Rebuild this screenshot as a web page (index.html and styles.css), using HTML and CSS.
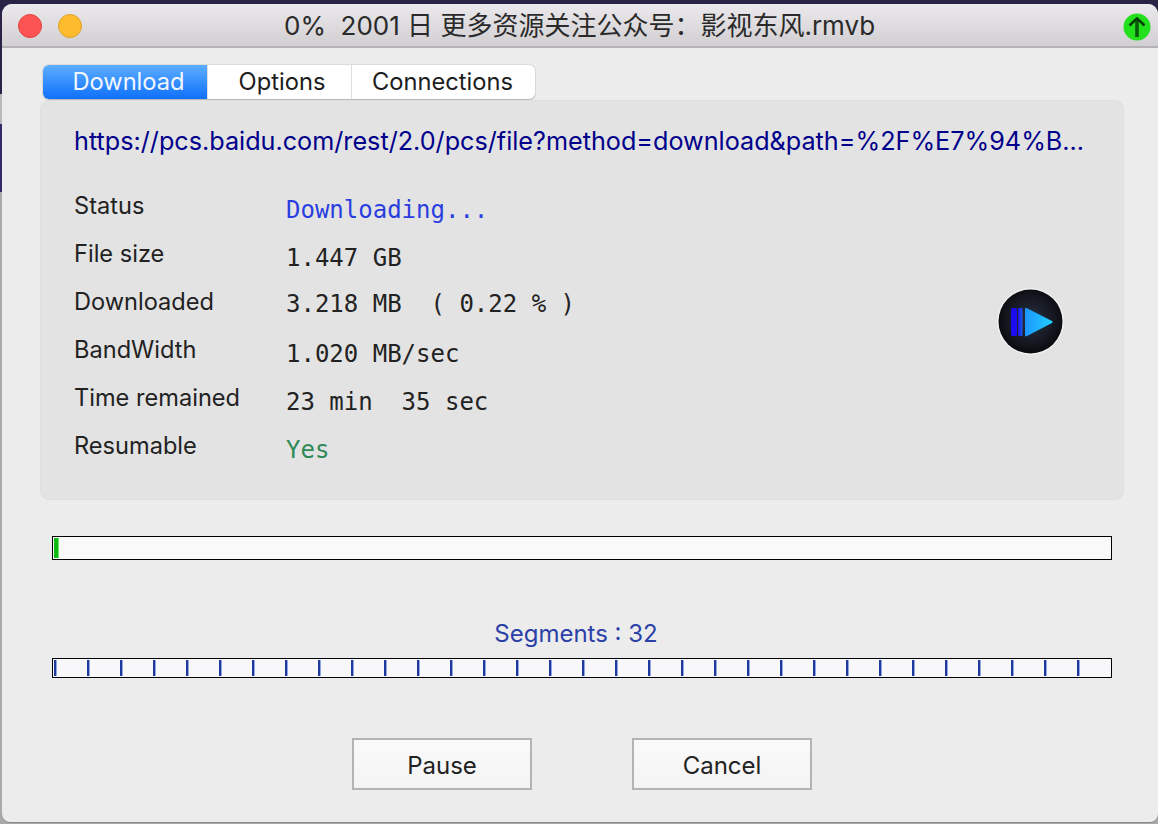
FILE: index.html
```html
<!DOCTYPE html>
<html lang="zh">
<head>
<meta charset="utf-8">
<title>Download</title>
<link rel="stylesheet" href="styles.css">
</head>
<body>
<div class="window">
  <header class="titlebar">
    <div class="lights"><span class="light red"></span><span class="light yellow"></span></div>
    <div class="title">0%&nbsp; 2001 日 更多资源关注公众号：影视东风.rmvb</div>
    <svg class="upicon" width="28" height="28" viewBox="0 0 28 28"><circle cx="14" cy="14" r="13.5" fill="#22e01c"/><path d="M14 24V6" fill="none" stroke="#0a5a0c" stroke-width="3.6"/><path d="M6.5 12.5Q11 8 14 5.5Q17 8 21.5 12.5" fill="none" stroke="#063d08" stroke-width="2.6"/></svg>
  </header>
  <main class="content">
    <nav class="tabs">
      <div class="tab active t1">Download</div>
      <div class="tab t2">Options</div>
      <div class="tab t3">Connections</div>
    </nav>
    <section class="panel">
      <div class="url">https://pcs.baidu.com/rest/2.0/pcs/file?method=download&amp;path=%2F%E7%94%B...</div>
      <div class="details">
        <div class="info">
          <div class="row"><span class="label">Status</span><span class="value blue">Downloading...</span></div>
          <div class="row"><span class="label">File size</span><span class="value">1.447 GB</span></div>
          <div class="row"><span class="label">Downloaded</span><span class="value raised">3.218 MB  ( 0.22 % )</span></div>
          <div class="row"><span class="label">BandWidth</span><span class="value">1.020 MB/sec</span></div>
          <div class="row"><span class="label">Time remained</span><span class="value">23 min  35 sec</span></div>
          <div class="row"><span class="label">Resumable</span><span class="value green">Yes</span></div>
        </div>
        <svg class="play" width="67" height="67" viewBox="0 0 67 67">
          <defs>
            <radialGradient id="disc" cx="50%" cy="48%" r="55%"><stop offset="0" stop-color="#2a3146"/><stop offset="0.7" stop-color="#14161e"/><stop offset="1" stop-color="#07080b"/></radialGradient>
            <linearGradient id="tri" x1="0" y1="0" x2="1" y2="0"><stop offset="0" stop-color="#1c96ff"/><stop offset="1" stop-color="#22d0ff"/></linearGradient>
            <linearGradient id="bar2" x1="0" y1="0" x2="1" y2="0"><stop offset="0" stop-color="#1c10e6"/><stop offset="1" stop-color="#1a5cf2"/></linearGradient>
            <filter id="soft"><feGaussianBlur stdDeviation="0.6"/></filter>
          </defs>
          <circle cx="33.5" cy="33.5" r="33.4" fill="#f2f2f2"/>
          <circle cx="33.5" cy="33.5" r="32" fill="url(#disc)"/>
          <rect x="14" y="20" width="6" height="28" rx="1.5" fill="#1f0ff0" filter="url(#soft)"/>
          <rect x="21" y="20" width="4.5" height="28" rx="1" fill="url(#bar2)" filter="url(#soft)"/>
          <path d="M28 21Q28 19.5 30 20.3L55 33Q56.5 34 55 35L30 48Q28 49 28 47.5Z" fill="url(#tri)"/>
        </svg>
      </div>
    </section>
    <div class="bar progress"><span class="fill"></span></div>
    <div class="segments-title">Segments : 32</div>
    <div class="bar segments">
      <i></i><i></i><i></i><i></i><i></i><i></i><i></i><i></i>
      <i></i><i></i><i></i><i></i><i></i><i></i><i></i><i></i>
      <i></i><i></i><i></i><i></i><i></i><i></i><i></i><i></i>
      <i></i><i></i><i></i><i></i><i></i><i></i><i></i><i></i>
    </div>
    <div class="actions">
      <button class="btn">Pause</button>
      <button class="btn">Cancel</button>
    </div>
  </main>
</div>
</body>
</html>
```
FILE: styles.css
```css
* { box-sizing: border-box; }
html, body { margin: 0; height: 100%; }
body {
  width: 1158px;
  height: 824px;
  overflow: hidden;
  background: linear-gradient(#2a2348 0, #2a2348 94px, #b9b8bb 94px, #b9b8bb 124px, #34286a 124px, #34286a 192px, #a9a9ab 192px, #a9a9ab 100%);
  font-family: "Inter", "Liberation Sans", "Noto Sans CJK SC", sans-serif;
  color: #222;
  padding: 4px 0 2px 2px;
}
.window {
  width: 1156px;
  height: 818px;
  background: #ececec;
  border-radius: 10px 10px 8px 8px;
  box-shadow: 0 1px 0 #8a8a8a;
  overflow: hidden;
  display: flex;
  flex-direction: column;
}
.titlebar {
  height: 44px;
  flex: none;
  display: flex;
  align-items: center;
  padding: 0 7px 0 16px;
  background: linear-gradient(#ebe9ec, #d1cfd2);
  border-bottom: 2px solid #b4b3b5;
}
.lights { display: flex; gap: 16px; width: 250px; flex: none; padding-top: 1px; }
.light { width: 24px; height: 24px; border-radius: 50%; }
.red { background: #fc5454; border: 1px solid #e0423f; }
.yellow { background: #fdbb2d; border: 1px solid #dea12a; }
.title {
  flex: 1;
  padding: 2px 0 0 16px;
  font-size: 26px;
  line-height: 42px;
  white-space: pre;
  color: #2a2a2a;
}
.upicon { flex: none; margin-top: 4px; }
.content { flex: 1; display: flex; flex-direction: column; padding: 17px 34px 0 38px; }
.tabs {
  display: flex;
  width: 492px;
  height: 34px;
  margin-left: 3px;
  background: #fff;
  border-radius: 6px;
  box-shadow: 0 1px 1px #b5b5b5, 0 0 0 1px #dcdcdc;
  overflow: hidden;
  font-size: 23.7px;
}
.tab { display: flex; align-items: center; justify-content: center; line-height: 34px; color: #1d1d1d; }
.tab + .tab { border-left: 1px solid #dedede; }
.t1 { width: 164px; padding-left: 7px; }
.t2 { width: 144px; padding-left: 5px; }
.t3 { width: 184px; padding-right: 2px; }
.active { background: linear-gradient(#5daeff, #0f70fb); color: #f2f7ff; }
.panel {
  width: 1084px;
  height: 400px;
  margin-top: 1px;
  background: #e3e3e3;
  border: 1px solid #dfdfdf;
  border-radius: 9px;
  padding: 23px 33px 0;
}
.url { font-size: 25.2px; line-height: 34px; color: #00008b; white-space: nowrap; }
.details { display: flex; align-items: flex-start; margin-top: 33px; }
.info { flex: 1; display: flex; flex-direction: column; }
.row { display: flex; height: 48px; align-items: flex-start; }
.label { width: 212px; font-size: 23.6px; line-height: 30px; color: #222; }
.value { font-family: "DejaVu Sans Mono", monospace; font-size: 24px; line-height: 30px; padding-top: 4px; white-space: pre; color: #222; }
.raised { padding-top: 2px; }
.blue { color: #2a3ee0; }
.green { color: #2e8b57; }
.play { flex: none; margin: 97px 26px 0 0; }
.bar { background: #f9f9f9; border: 1px solid #000; width: 1060px; margin-left: 12px; flex: none; }
.progress { height: 24px; margin-top: 36px; padding: 1px; }
.fill { display: block; width: 5px; height: 20px; background: #14b814; border-right: 1px solid #62e862; }
.segments-title { margin-top: 60px; height: 28px; line-height: 28px; font-size: 24px; text-align: center; color: #2b41a8; width: 1072px; }
.segments { height: 20px; margin-top: 10px; padding: 1px; display: flex; gap: 30px; background: #f8f8fb; }
.segments i { display: block; width: 3px; height: 16px; background: #1f3a9c; border-right: 1px solid #93a6e6; flex: none; }
.actions { display: flex; gap: 100px; margin: 60px 0 0 312px; }
.btn {
  width: 180px;
  height: 52px;
  padding-top: 4px;
  background: linear-gradient(#fafafa, #f4f4f4);
  border: 2px solid #b3b3b3;
  border-radius: 0;
  font: 24px "Inter", "Liberation Sans", sans-serif;
  color: #222;
}
```
